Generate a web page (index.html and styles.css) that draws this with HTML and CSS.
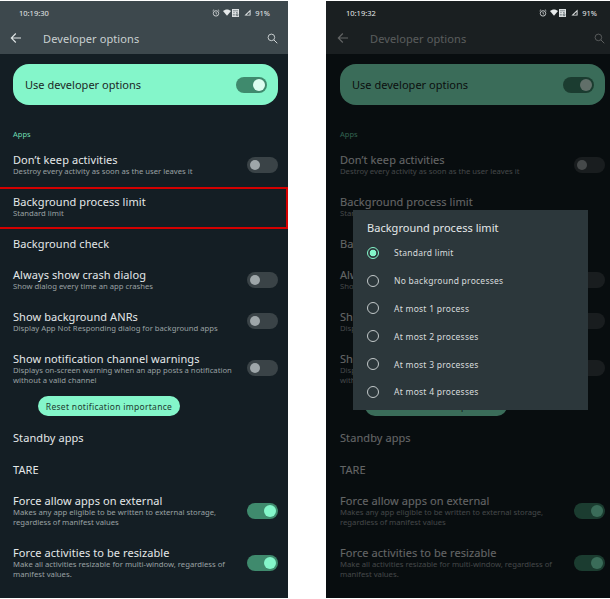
FILE: index.html
```html
<!DOCTYPE html>
<html lang="en">
<head>
<meta charset="utf-8">
<title>Developer options</title>
<link rel="stylesheet" href="styles.css">
</head>
<body>
<svg class="defs" width="0" height="0" aria-hidden="true">
  <symbol id="i-alarm" viewBox="0 0 10 10"><circle cx="5" cy="5.5" r="3.4" fill="none" stroke="currentColor" stroke-width="1"/><path d="M5 3.6V5.7L6.4 6.5M.8 2.4 2.6.8M9.2 2.4 7.4.8" fill="none" stroke="currentColor" stroke-width=".9"/></symbol>
  <symbol id="i-wifi" viewBox="0 0 10 8"><path d="M0 2.2C2.8-.4 7.2-.4 10 2.2L5 8Z" fill="currentColor"/></symbol>
  <symbol id="i-data" viewBox="0 0 8 9"><path d="M0 0H8V9H0Z" fill="currentColor"/><path d="M1 2H7M1.5 4H3M4.5 4H6.5M1.5 5.5V7.5M3.2 5.5V7.5M5 5.5H6.8V7.5H5Z" fill="none" stroke="#37434a" stroke-width=".7"/></symbol>
  <symbol id="i-signal" viewBox="0 0 8 8"><path d="M7.5 .5V7.5H.5ZM6.4 3 3 6.6H6.4Z" fill="currentColor" fill-rule="evenodd"/></symbol>
  <symbol id="i-back" viewBox="0 0 12 12"><path d="M11 6H1.5M5.8 1.5 1.3 6l4.5 4.5" fill="none" stroke="currentColor" stroke-width="1.1"/></symbol>
  <symbol id="i-search" viewBox="0 0 12 12"><circle cx="4.8" cy="4.8" r="3.6" fill="none" stroke="currentColor" stroke-width=".9"/><path d="M7.5 7.5 11.2 11.2" stroke="currentColor" stroke-width="1"/></symbol>
</svg>

<main class="stage">
  <section class="phone phone-left">
    <div class="appbar">
      <div class="status">
        <span class="clock">10:19:30</span>
        <span class="status-icons">
          <svg class="s-alarm"><use href="#i-alarm"/></svg>
          <svg class="s-wifi"><use href="#i-wifi"/></svg>
          <svg class="s-data"><use href="#i-data"/></svg>
          <svg class="s-signal"><use href="#i-signal"/></svg>
          <span class="battery">91%</span>
        </span>
      </div>
      <div class="toolbar">
        <svg class="tb-back"><use href="#i-back"/></svg>
        <span class="tb-title">Developer options</span>
        <svg class="tb-search"><use href="#i-search"/></svg>
      </div>
    </div>
    <div class="master">
      <span>Use developer options</span>
      <span class="switch on-dark"></span>
    </div>
    <h2 class="section">Apps</h2>
    <div class="row"><div class="text"><div class="title">Don’t keep activities</div><div class="sub">Destroy every activity as soon as the user leaves it</div></div><span class="switch"></span></div>
    <div class="row selected"><div class="text"><div class="title">Background process limit</div><div class="sub">Standard limit</div></div></div>
    <div class="row"><div class="text"><div class="title">Background check</div></div></div>
    <div class="row"><div class="text"><div class="title">Always show crash dialog</div><div class="sub">Show dialog every time an app crashes</div></div><span class="switch"></span></div>
    <div class="row"><div class="text"><div class="title">Show background ANRs</div><div class="sub">Display App Not Responding dialog for background apps</div></div><span class="switch"></span></div>
    <div class="row"><div class="text"><div class="title">Show notification channel warnings</div><div class="sub">Displays on-screen warning when an app posts a notification without a valid channel</div></div><span class="switch"></span></div>
    <button class="reset">Reset notification importance</button>
    <div class="row"><div class="text"><div class="title">Standby apps</div></div></div>
    <div class="row"><div class="text"><div class="title">TARE</div></div></div>
    <div class="row"><div class="text"><div class="title">Force allow apps on external</div><div class="sub">Makes any app eligible to be written to external storage, regardless of manifest values</div></div><span class="switch on"></span></div>
    <div class="row"><div class="text"><div class="title">Force activities to be resizable</div><div class="sub">Make all activities resizable for multi-window, regardless of manifest values.</div></div><span class="switch on"></span></div>
  </section>

  <section class="phone phone-right">
    <div class="appbar">
      <div class="status">
        <span class="clock">10:19:32</span>
        <span class="status-icons">
          <svg class="s-alarm"><use href="#i-alarm"/></svg>
          <svg class="s-wifi"><use href="#i-wifi"/></svg>
          <svg class="s-data"><use href="#i-data"/></svg>
          <svg class="s-signal"><use href="#i-signal"/></svg>
          <span class="battery">91%</span>
        </span>
      </div>
      <div class="toolbar">
        <svg class="tb-back"><use href="#i-back"/></svg>
        <span class="tb-title">Developer options</span>
        <svg class="tb-search"><use href="#i-search"/></svg>
      </div>
    </div>
    <div class="master">
      <span>Use developer options</span>
      <span class="switch on-dark"></span>
    </div>
    <h2 class="section">Apps</h2>
    <div class="row"><div class="text"><div class="title">Don’t keep activities</div><div class="sub">Destroy every activity as soon as the user leaves it</div></div><span class="switch"></span></div>
    <div class="row"><div class="text"><div class="title">Background process limit</div><div class="sub">Standard limit</div></div></div>
    <div class="row"><div class="text"><div class="title">Background check</div></div></div>
    <div class="row"><div class="text"><div class="title">Always show crash dialog</div><div class="sub">Show dialog every time an app crashes</div></div><span class="switch"></span></div>
    <div class="row"><div class="text"><div class="title">Show background ANRs</div><div class="sub">Display App Not Responding dialog for background apps</div></div><span class="switch"></span></div>
    <div class="row"><div class="text"><div class="title">Show notification channel warnings</div><div class="sub">Displays on-screen warning when an app posts a notification without a valid channel</div></div><span class="switch"></span></div>
    <button class="reset">Reset notification importance</button>
    <div class="row"><div class="text"><div class="title">Standby apps</div></div></div>
    <div class="row"><div class="text"><div class="title">TARE</div></div></div>
    <div class="row"><div class="text"><div class="title">Force allow apps on external</div><div class="sub">Makes any app eligible to be written to external storage, regardless of manifest values</div></div><span class="switch on"></span></div>
    <div class="row"><div class="text"><div class="title">Force activities to be resizable</div><div class="sub">Make all activities resizable for multi-window, regardless of manifest values.</div></div><span class="switch on"></span></div>

    <div class="scrim"></div>
    <div class="dialog">
      <h3 class="dialog-title">Background process limit</h3>
      <div class="option checked"><span class="radio"></span>Standard limit</div>
      <div class="option"><span class="radio"></span>No background processes</div>
      <div class="option"><span class="radio"></span>At most 1 process</div>
      <div class="option"><span class="radio"></span>At most 2 processes</div>
      <div class="option"><span class="radio"></span>At most 3 processes</div>
      <div class="option"><span class="radio"></span>At most 4 processes</div>
    </div>
  </section>
</main>
</body>
</html>
```

FILE: styles.css
```css
* { box-sizing: border-box; }
html, body { margin: 0; padding: 0; background: #fff; }
body { width: 610px; height: 599px; overflow: hidden; font-family: "Noto Sans", sans-serif; }
.defs { position: absolute; }

.stage { display: flex; gap: 38px; padding-top: 1px; height: 598px; }
.phone { position: relative; height: 597px; background: #141e24; color: #e4e8e9; overflow: hidden; }
.phone-left { flex: 0 0 288px; --l: 13px; --r: 10px; }
.phone-right { flex: 0 0 284px; --l: 14px; --r: 5px; }

.appbar { height: 53px; background: #3d484d; display: flex; flex-direction: column; }
.status { height: 23px; padding: 0 calc(var(--r) + 8px) 0 calc(var(--l) + 6px); display: flex; align-items: center; justify-content: space-between; font-size: 7.5px; color: #e6e9ea; position: relative; z-index: 2; }
.status-icons { display: flex; align-items: center; }
.status-icons svg { color: #e6e9ea; }
.s-alarm { width: 8px; height: 8px; margin-right: 3px; }
.s-wifi { width: 8px; height: 7px; margin-right: 1px; }
.s-data { width: 7px; height: 8px; margin-right: 5px; }
.s-signal { width: 7px; height: 7px; margin-right: 4px; }
.toolbar { flex: 1; display: flex; align-items: center; padding: 0 var(--r) 2px calc(var(--l) - 3px); color: #dfe4e5; }
.tb-back { width: 12px; height: 12px; flex: none; }
.tb-title { margin-left: 21px; font-size: 11px; letter-spacing: .1px; color: #c9d0d1; flex: 1; }
.tb-search { width: 11px; height: 11px; flex: none; }

.master { margin: 10px var(--r) 0 var(--l); height: 41px; border-radius: 16px; background: #84f6ca; color: #1c2826; display: flex; align-items: center; justify-content: space-between; padding: 0 11px 0 12px; font-size: 11px; letter-spacing: .02px; }
.switch { flex: none; width: 31px; height: 16px; border-radius: 8px; background: #3a4347; position: relative; }
.switch::after { content: ""; position: absolute; left: 3px; top: 3px; width: 10px; height: 10px; border-radius: 50%; background: #9ea6a9; }
.switch.on { background: #3f8a6d; }
.switch.on::after { left: auto; right: 2px; top: 2px; width: 12px; height: 12px; background: #84f6ca; }
.switch.on-dark { background: #3f8a6d; }
.switch.on-dark::after { left: auto; right: 2px; top: 2px; width: 12px; height: 12px; background: #dcfdf0; }

.section { margin: 24px var(--l) 4.9px; font-size: 7.5px; line-height: 10px; font-weight: 400; color: #6fdcb2; }
.row { display: flex; align-items: center; padding: 9.35px var(--r) 9.35px var(--l); gap: 8px; }
.text { flex: 1; min-width: 0; }
.title { font-size: 11px; line-height: 13px; letter-spacing: .08px; color: #e4e8e9; }
.sub { font-size: 7.7px; line-height: 10px; color: #9aa1a3; }
.row.selected { margin: 1.5px 0 -1.5px; padding-top: 8.35px; padding-bottom: 10.35px; box-shadow: inset 0 2px #d40000, inset 0 -2px #d40000, inset -2px 0 #d40000; }

.reset { display: block; margin: 2.4px 0 5.2px calc(var(--l) + 25px); width: 142px; height: 20px; padding: 0; border: 0; border-radius: 10px; background: #84f6ca; color: #1f3a30; font: 400 8.5px "Noto Sans", sans-serif; letter-spacing: .3px; }

.scrim { position: absolute; inset: 0; background: rgba(0, 0, 0, .56); }
.dialog { position: absolute; left: 27px; top: 209px; width: 235px; height: 200px; background: #2c373b; padding: 10px 14px 0; }
.dialog-title { margin: 0 0 4px; font-size: 11px; line-height: 15px; font-weight: 400; letter-spacing: .03px; color: #e4e8e9; }
.option { display: flex; align-items: center; height: 27.8px; font-size: 8.5px; letter-spacing: .25px; color: #d8dcdd; }
.radio { flex: none; width: 12px; height: 12px; margin-right: 15px; border-radius: 50%; border: 1px solid #c3c9ca; }
.option.checked .radio { border-color: #84f6ca; background: radial-gradient(circle, #84f6ca 0 3.2px, transparent 3.6px); }
```
